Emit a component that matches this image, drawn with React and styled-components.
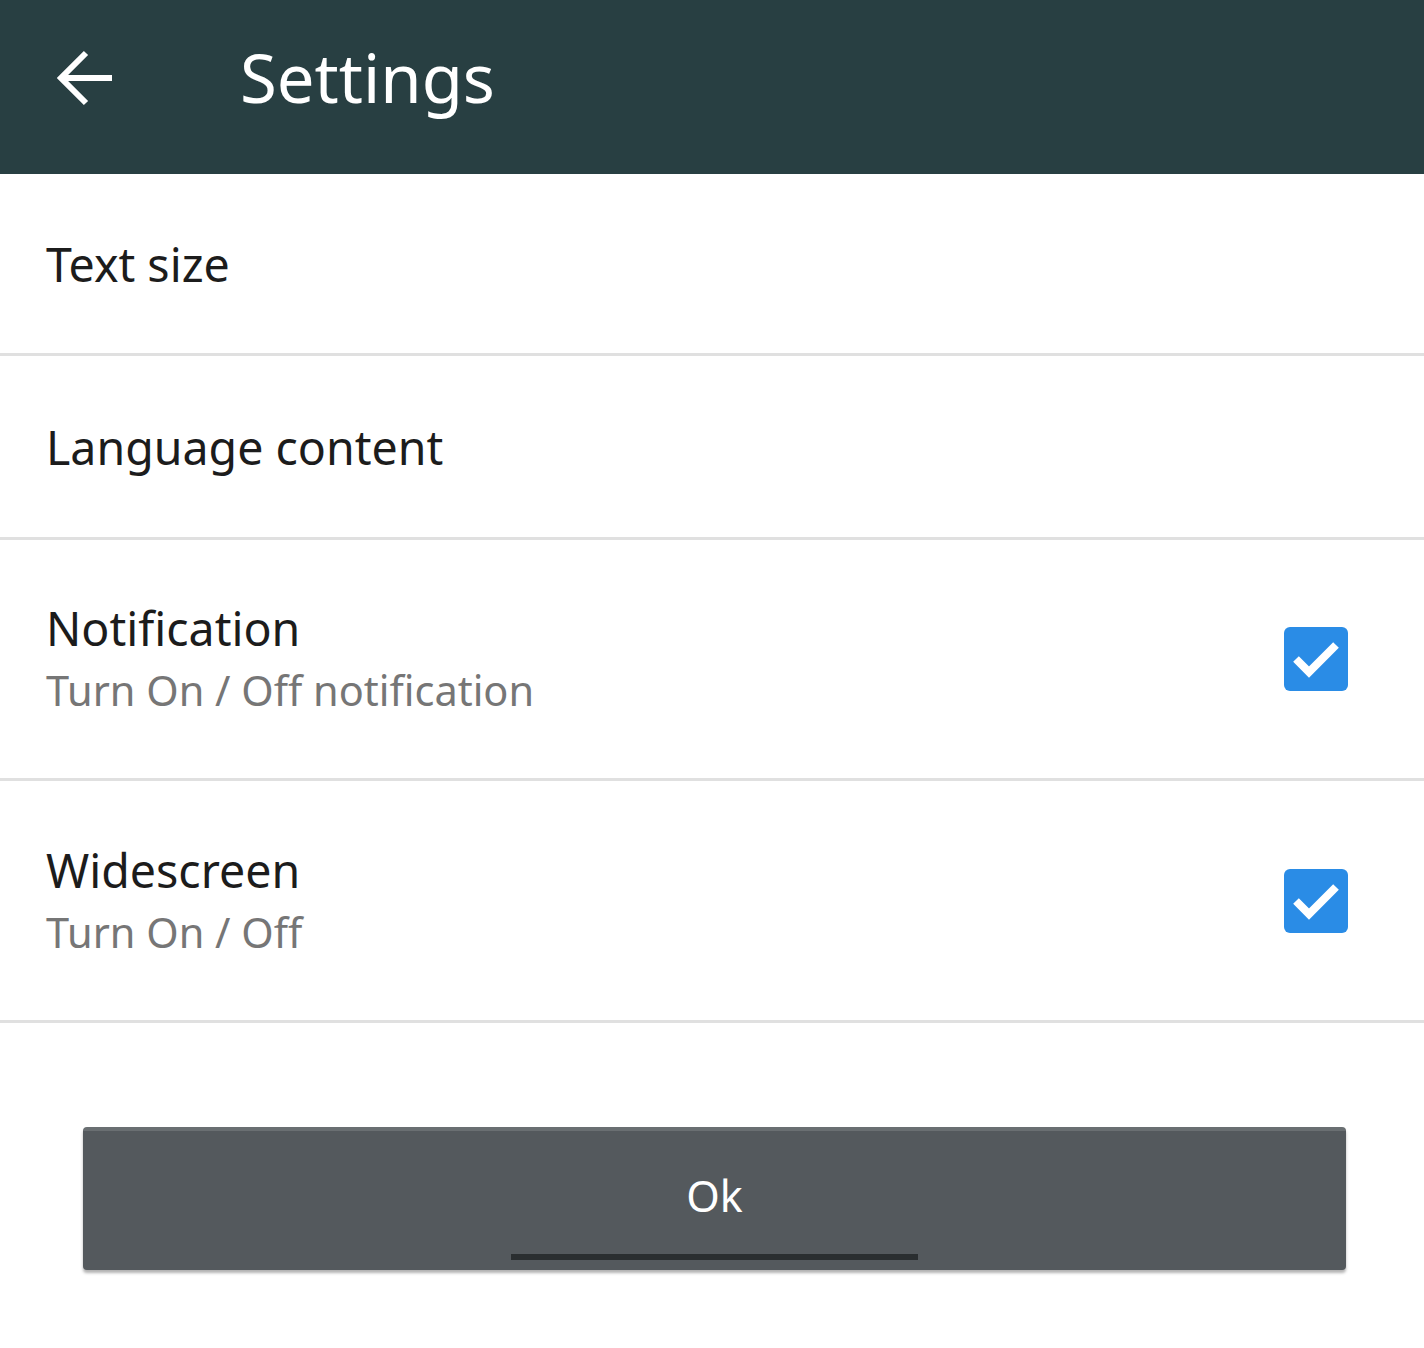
import React from 'react'
import styled, { createGlobalStyle } from 'styled-components';

const Global = createGlobalStyle`
    body {
        margin: 0;
        background: #fff;
        font-family: "Noto Sans", "Open Sans", sans-serif;
    }
`;

const Page = styled.div`
    width: 1424px;
    min-height: 1348px;
    background: #fff;
`;
const Header = styled.header`
    height: 174px;
    background: #283f42;
    display: flex;
    align-items: center;
    padding-left: 56px;
    box-sizing: border-box;
`;
const Back = styled.button`
    width: 60px;
    height: 60px;
    padding: 0;
    border: none;
    background: none;
    display: flex;
    align-items: center;
    justify-content: center;
    margin-right: 124px;
    margin-top: -16px;
`;
const Title = styled.h1`
    margin: 0;
    margin-top: -20px;
    font-size: 67px;
    font-weight: 400;
    color: #fff;
`;
const Row = styled.div`
    height: ${p => p.h}px;
    border-bottom: 3px solid #e0e0e0;
    display: flex;
    align-items: center;
    justify-content: space-between;
    padding: 0 76px 0 46px;
`;
const Texts = styled.div`
    display: flex;
    flex-direction: column;
`;
const Label = styled.div`
    font-size: 46.5px;
    color: #1c1c1c;
    line-height: 62px;
`;
const Sub = styled.div`
    font-size: 41.5px;
    color: #767676;
    line-height: 62px;
`;
const Check = styled.div`
    width: 64px;
    height: 64px;
    border-radius: 6px;
    background: #2a8ce6;
    display: flex;
    align-items: center;
    justify-content: center;
`;
const Footer = styled.div`
    padding: 104px 78px 0 83px;
`;
const OkButton = styled.button`
    width: 100%;
    height: 143px;
    border: none;
    border-top: 4px solid #6a6f72;
    border-radius: 4px;
    background: #54595d;
    box-shadow: 0 3px 3px rgba(0, 0, 0, 0.3);
    color: #fff;
    font-family: inherit;
    font-size: 43px;
    position: relative;
    display: flex;
    justify-content: center;
    padding-top: 35px;
    box-sizing: border-box;
`;
const Underline = styled.span`
    position: absolute;
    left: 428px;
    right: 428px;
    bottom: 10px;
    height: 6px;
    background: #2a2e30;
`;

function Checkbox() {
    return (
        <Check>
            <svg width="52" height="52" viewBox="0 0 52 52">
                <path d="M6 26 L19 39 L46 12" fill="none" stroke="#fff" strokeWidth="8" />
            </svg>
        </Check>
    )
}

const rows = [
    { label: 'Text size', h: 179 },
    { label: 'Language content', h: 181 },
    { label: 'Notification', sub: 'Turn On / Off notification', check: true, h: 238 },
    { label: 'Widescreen', sub: 'Turn On / Off', check: true, h: 239 },
];

function App() {
    return (
        <Page>
            <Global />
            <Header>
                <Back>
                    <svg width="60" height="60" viewBox="0 0 60 60">
                        <path d="M56 29 H6 M30 4 L5 29 L30 54" fill="none" stroke="#fff" strokeWidth="6" />
                    </svg>
                </Back>
                <Title>Settings</Title>
            </Header>
            {rows.map(r => (
                <Row key={r.label} h={r.h}>
                    <Texts>
                        <Label>{r.label}</Label>
                        {r.sub && <Sub>{r.sub}</Sub>}
                    </Texts>
                    {r.check && <Checkbox />}
                </Row>
            ))}
            <Footer>
                <OkButton>
                    Ok
                    <Underline />
                </OkButton>
            </Footer>
        </Page>
    )
}

export default App
